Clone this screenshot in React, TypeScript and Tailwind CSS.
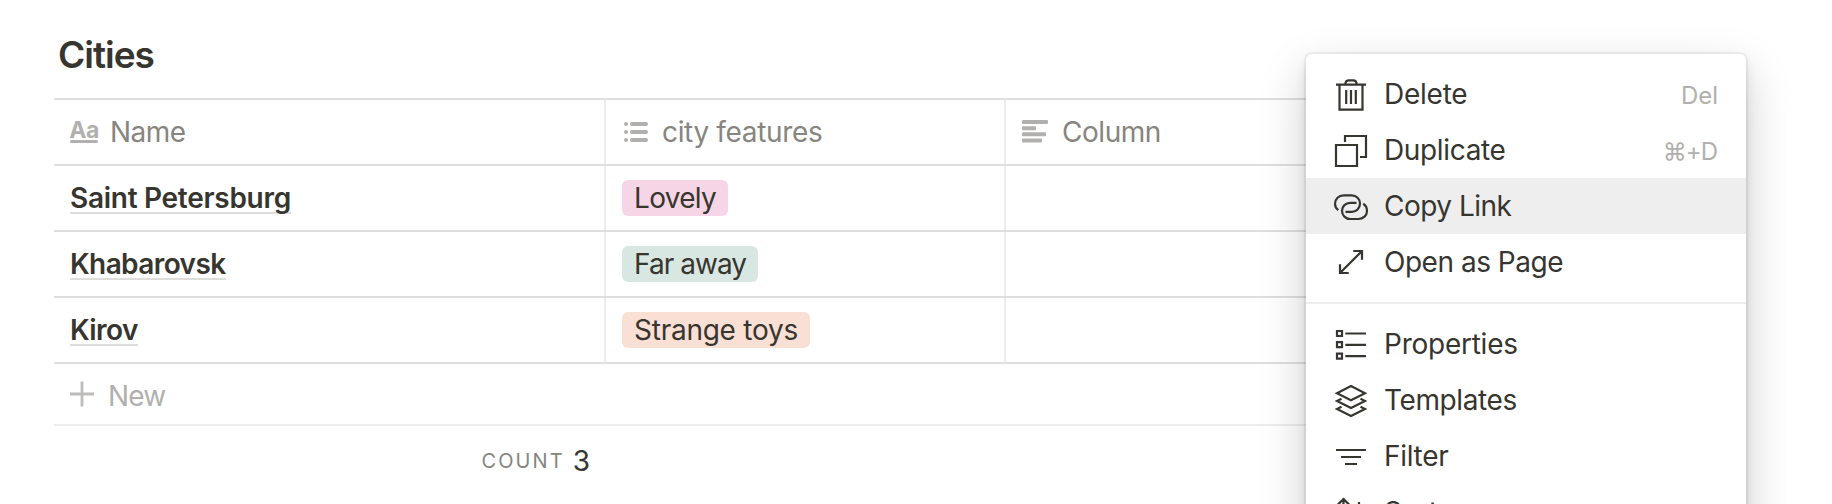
import React from "react";

const ink = "#37352f";

type IconProps = { children: React.ReactNode };

function Icon({ children }: IconProps) {
  return (
    <svg
      width="36"
      height="36"
      viewBox="0 0 36 36"
      fill="none"
      stroke={ink}
      strokeWidth="2.2"
      className="shrink-0"
    >
      {children}
    </svg>
  );
}

const TrashIcon = () => (
  <Icon>
    <path d="M3 8.7H33M6.5 9V33.7H29.5V9M12.3 8.5C12.3 5.8 13.8 4.3 16 4.3H20C22.2 4.3 23.7 5.8 23.7 8.5M13.2 14V28M18 14V28M22.8 14V28" />
  </Icon>
);

const DuplicateIcon = () => (
  <Icon>
    <path d="M3 13H24V34H3ZM12 10V4H33V25H27" />
  </Icon>
);

const LinkIcon = () => (
  <Icon>
    <path d="M5.3 22.2C3.2 20.7 2 18.4 2 15.8C2 10.9 5.8 7.3 10.6 7.3H18.8C23.4 7.3 27 10.9 27 15.5C27 20.3 23.4 23.8 18.8 23.8H12.5" />
    <path d="M23.5 14.8H17.2C12.6 14.8 9 18.3 9 22.8C9 27.4 12.6 31 17.2 31H25.4C30.2 31 34 27.4 34 22.9C34 20 32.6 17.3 30.2 15.8" />
  </Icon>
);

const ExpandIcon = () => (
  <Icon>
    <path d="M7 29L29 7M20.3 7H29V15.7M7 20.3V29H15.7" />
  </Icon>
);

const PropertiesIcon = () => (
  <Icon>
    <path d="M4 5H9V10H4ZM4 16.2H9V21.2H4ZM4 27.6H9V32.6H4ZM12.3 7.5H33M12.3 18.8H33M12.3 30.2H33" />
  </Icon>
);

const TemplatesIcon = () => (
  <Icon>
    <path d="M18 4L32 11.2L18 18.3L4 11.2Z" />
    <path d="M8.5 16.7L4 19L18 26.1L32 19L27.5 16.7" />
    <path d="M8.5 24.7L4 27L18 34.1L32 27L27.5 24.7" />
  </Icon>
);

const FilterIcon = () => (
  <Icon>
    <path d="M3 12H33M8 19H28M12 26H24" />
  </Icon>
);

const SortIcon = () => (
  <Icon>
    <path d="M10.5 5V32M4.5 11L10.5 5L16.5 11M26 8V32M20 26L26 32L32 26" />
  </Icon>
);

type ItemProps = {
  icon: React.ReactNode;
  label: string;
  labelClass: string;
  hint?: React.ReactNode;
  active?: boolean;
};

function MenuItem({ icon, label, labelClass, hint, active }: ItemProps) {
  return (
    <div
      className={`flex h-14 shrink-0 items-center pl-[27px] pr-7 ${active ? "bg-[#eeeeee]" : ""}`}
    >
      {icon}
      <span className={`ml-[15px] grow pt-px text-[28px] leading-[55px] ${labelClass}`}>{label}</span>
      {hint}
    </div>
  );
}

function Tag({ children, className }: { children: React.ReactNode; className: string }) {
  return (
    <span className={`flex h-9 items-center rounded-md px-3 text-[28px] leading-9 ${className}`}>
      {children}
    </span>
  );
}

type RowProps = { name: string; nameClass: string; tag: React.ReactNode };

function Row({ name, nameClass, tag }: RowProps) {
  return (
    <div className="flex h-[66px] border-b-2 border-[#dfdfde]">
      <div className="flex w-[552px] items-center border-r-2 border-[#ededec] pl-4">
        <span
          className={`flex h-8 items-center border-b-2 border-[#dddddc] pt-px text-[28px] font-semibold leading-7 ${nameClass}`}
        >
          {name}
        </span>
      </div>
      <div className="flex w-[400px] items-center border-r-2 border-[#ededec] pl-4">{tag}</div>
      <div className="grow" />
    </div>
  );
}

function Table() {
  return (
    <div className="ml-[54px] w-[1692px]">
      <div className="flex h-[68px] border-y-2 border-[#dfdfde] text-[28px] text-[#868580]">
        <div className="flex w-[552px] items-center border-r-2 border-[#ededec] pl-4">
          <span className="flex h-[22px] w-7 flex-col items-center justify-end">
            <span className="text-[23px] font-bold leading-[19px] tracking-[-0.5px] text-[#b1b0ae]">Aa</span>
            <span className="h-[3px] w-7 shrink-0 rounded-full bg-[#b1b0ae]" />
          </span>
          <span className="ml-3 tracking-[-0.5px]">Name</span>
        </div>
        <div className="flex w-[400px] items-center border-r-2 border-[#ededec] pl-[18px]">
          <svg width="24" height="20" viewBox="0 0 24 20" fill="#b1b0ae">
            <circle cx="2" cy="2" r="2" />
            <circle cx="2" cy="10" r="2" />
            <circle cx="2" cy="18" r="2" />
            <rect x="6" y="0" width="18" height="4" rx="2" />
            <rect x="6" y="8" width="18" height="4" rx="2" />
            <rect x="6" y="16" width="18" height="4" rx="2" />
          </svg>
          <span className="ml-[14px] tracking-[-0.35px]">city features</span>
        </div>
        <div className="flex items-center pl-4">
          <svg width="26" height="23" viewBox="0 0 26 23" fill="#b1b0ae" className="-mt-0.5">
            <rect x="0" y="0" width="26" height="4" rx="1" />
            <rect x="0" y="6.2" width="14" height="4" rx="1" />
            <rect x="0" y="12.3" width="24" height="4" rx="1" />
            <rect x="0" y="18.5" width="20" height="4" rx="1" />
          </svg>
          <span className="ml-[14px] tracking-[-0.45px]">Column</span>
        </div>
      </div>
      <Row
        name="Saint Petersburg"
        nameClass="tracking-[-0.28px]"
        tag={<Tag className="bg-[#f5d5e6] tracking-[-0.68px]">Lovely</Tag>}
      />
      <Row
        name="Khabarovsk"
        nameClass="tracking-[-0.6px]"
        tag={<Tag className="bg-[#d9e7e2] tracking-[-0.95px]">Far away</Tag>}
      />
      <Row
        name="Kirov"
        nameClass="tracking-[-0.6px]"
        tag={<Tag className="bg-[#fadfd5] tracking-[-0.25px]">Strange toys</Tag>}
      />
      <div className="flex h-[62px] items-center border-b-2 border-[#ededec] pl-4 text-[28px] text-[#b1b0ae]">
        <svg width="24" height="26" viewBox="0 0 24 26" stroke="#bdbcba" strokeWidth="2.8">
          <path d="M0 13H24M12 0.5V25.5" />
        </svg>
        <span className="ml-[14px] pt-1 tracking-[-0.8px]">New</span>
      </div>
      <div className="flex h-[70px] w-[536px] items-center justify-end">
        <span className="text-[20px] tracking-[2.1px] text-[#868580]">COUNT</span>
        <span className="ml-2 text-[28px]">3</span>
      </div>
    </div>
  );
}

function Hint({ children, className = "" }: { children: React.ReactNode; className?: string }) {
  return <span className={`pt-[3px] text-[24px] text-[#b1b0ae] ${className}`}>{children}</span>;
}

function Menu() {
  return (
    <div className="absolute left-[1306px] top-[54px] flex h-[600px] w-[440px] flex-col rounded-md bg-white py-3 shadow-[0_0_0_2px_rgba(15,15,15,0.05),0_6px_12px_rgba(15,15,15,0.1),0_18px_48px_rgba(15,15,15,0.2)]">
      <MenuItem icon={<TrashIcon />} label="Delete" labelClass="tracking-[-0.25px]" hint={<Hint>Del</Hint>} />
      <MenuItem
        icon={<DuplicateIcon />}
        label="Duplicate"
        labelClass="tracking-[-0.35px]"
        hint={<Hint className="mr-px tracking-[-1px]">⌘+D</Hint>}
      />
      <MenuItem icon={<LinkIcon />} label="Copy Link" labelClass="tracking-[-0.5px]" active />
      <MenuItem icon={<ExpandIcon />} label="Open as Page" labelClass="tracking-[-0.48px]" />
      <div className="my-3 h-0.5 shrink-0 bg-[#ededec]" />
      <MenuItem icon={<PropertiesIcon />} label="Properties" labelClass="tracking-[-0.25px]" />
      <MenuItem icon={<TemplatesIcon />} label="Templates" labelClass="tracking-[-0.4px]" />
      <MenuItem icon={<FilterIcon />} label="Filter" labelClass="tracking-[-0.3px]" />
      <MenuItem icon={<SortIcon />} label="Sort" labelClass="tracking-[-0.3px]" />
    </div>
  );
}

export default function App() {
  return (
    <div className="relative h-[504px] w-[1832px] overflow-hidden bg-white font-['Inter',sans-serif] text-[#37352f]">
      <h1 className="flex h-[98px] items-center pl-[58px] pt-3 text-[37px] font-semibold tracking-[-1px]">
        Cities
      </h1>
      <Table />
      <Menu />
    </div>
  );
}
